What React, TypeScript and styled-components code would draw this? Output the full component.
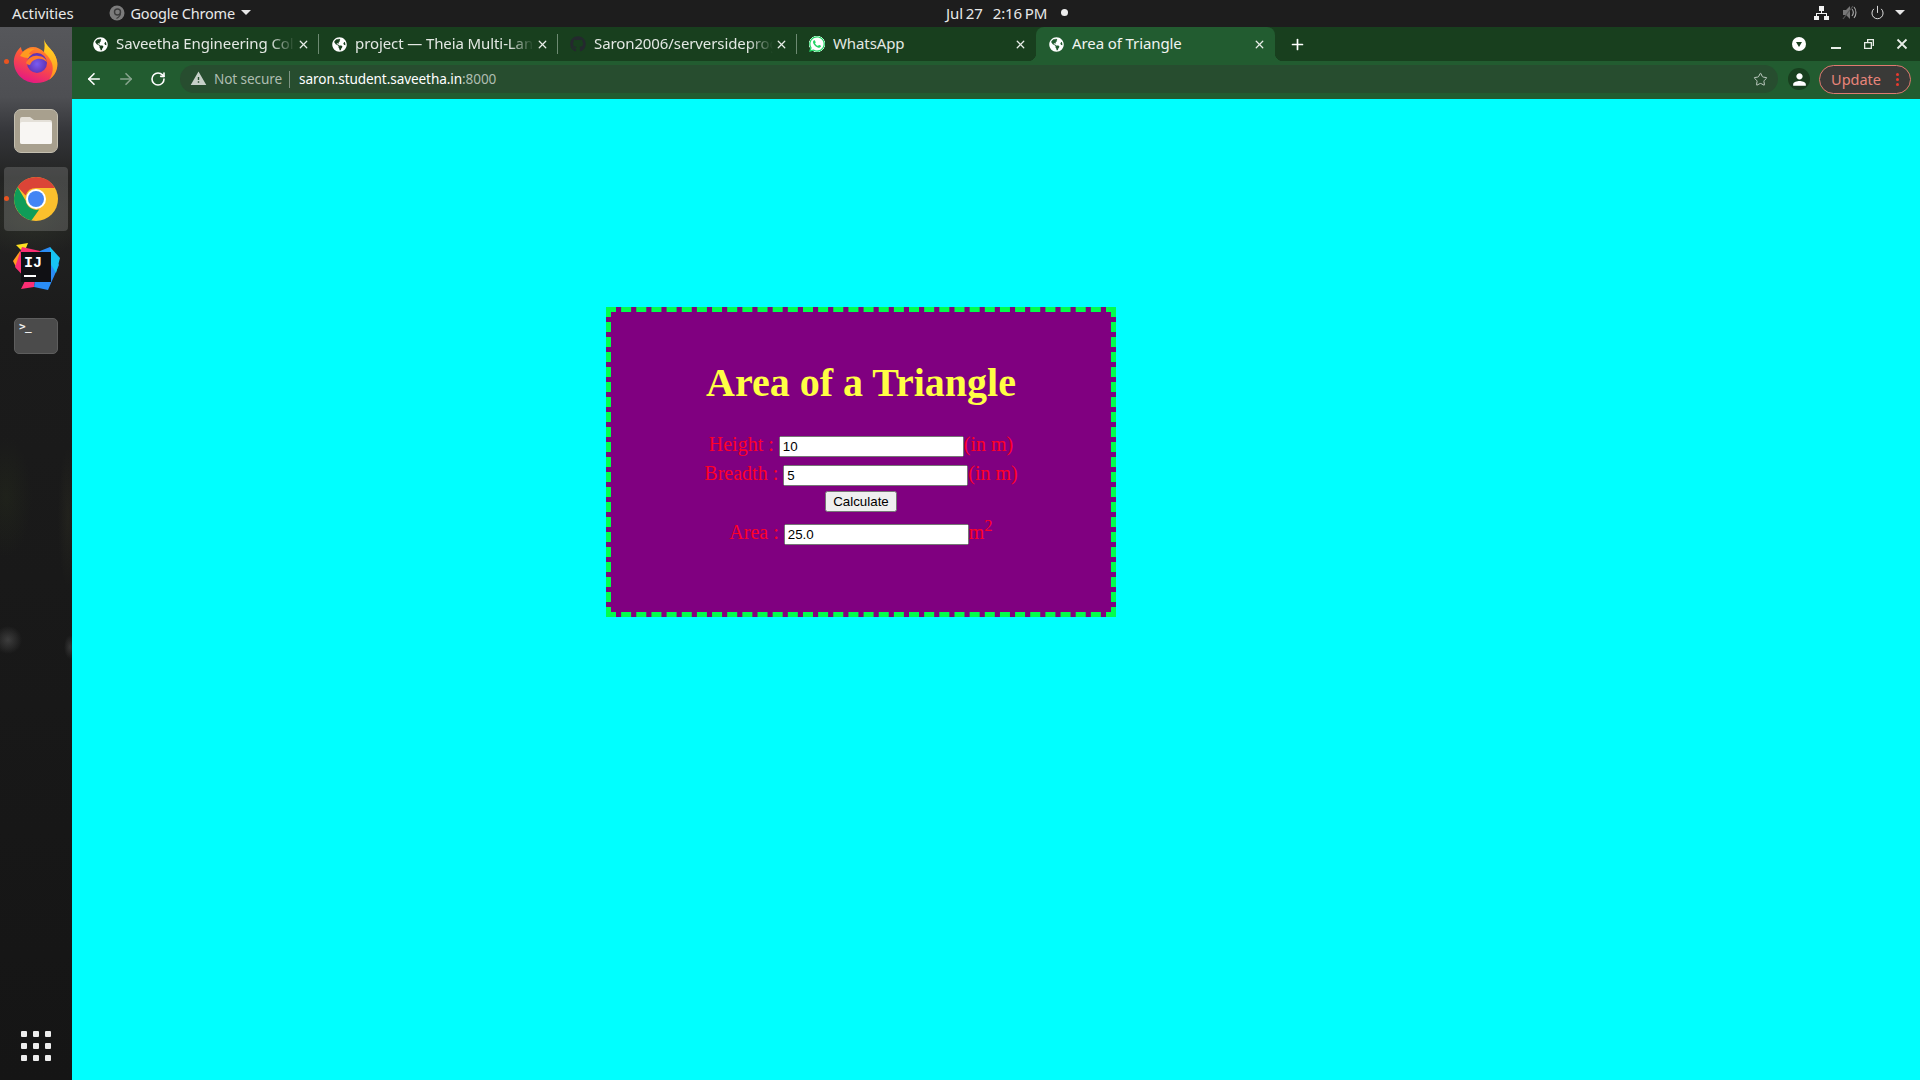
import { useState } from "react";
import styled, { createGlobalStyle } from "styled-components";
import { ArrowLeft, ArrowRight, RotateCw, Star, Plus, X, Power } from "lucide-react";
import { FaGlobeAmericas, FaWhatsapp, FaGithub } from "react-icons/fa";
import { MdPerson, MdWarning } from "react-icons/md";

const GlobalStyle = createGlobalStyle`
  html, body { margin: 0; padding: 0; height: 100%; background: #1d1d1d; overflow: hidden; }
  #root { height: 100%; }
  * { box-sizing: border-box; }
`;

const UI_FONT = `"Noto Sans", "Open Sans", sans-serif`;

const Desktop = styled.div`
  width: 1920px;
  height: 1080px;
  display: flex;
  flex-direction: column;
  font-family: ${UI_FONT};
`;

/* ---------- gnome top bar ---------- */
const TopBar = styled.header`
  height: 27px;
  flex: none;
  background: #1d1d1d;
  color: #e8e8e8;
  font-size: 15px;
  letter-spacing: -0.1px;
  display: flex;
  align-items: center;
  position: relative;
  padding: 0 0 2px 12px;
`;
const AppMenu = styled.div`
  display: flex;
  align-items: center;
  margin-left: 35px;
  gap: 6px;
  font-size: 14.5px;
  letter-spacing: -0.2px;
`;
const Caret = styled.span`
  width: 0;
  height: 0;
  border-left: 5px solid transparent;
  border-right: 5px solid transparent;
  border-top: 5px solid #e8e8e8;
`;
const TrayCaret = styled(Caret)`
  margin-left: -3px;
`;
const Clock = styled.div`
  position: absolute;
  left: 946px;
  top: 0;
  height: 25px;
  display: flex;
  align-items: center;
  gap: 10px;
  word-spacing: -1px;
`;
const RecordDot = styled.span`
  width: 7px;
  height: 7px;
  border-radius: 50%;
  background: #eee;
  margin-left: 4px;
`;
const Tray = styled.div`
  margin-left: auto;
  display: flex;
  align-items: center;
  gap: 13px;
  padding-right: 15px;
`;

/* ---------- dock ---------- */
const Body = styled.div`
  flex: 1;
  display: flex;
  min-height: 0;
`;
const Dock = styled.aside`
  width: 72px;
  flex: none;
  position: relative;
  display: flex;
  flex-direction: column;
  align-items: center;
  padding-top: 3px;
  background:
    radial-gradient(ellipse 14px 14px at 8px 613px, rgba(190, 190, 190, 0.22), transparent),
    radial-gradient(ellipse 6px 12px at 70px 620px, rgba(170, 170, 170, 0.2), transparent),
    radial-gradient(ellipse 26px 60px at 6px 470px, rgba(50, 62, 30, 0.22), transparent),
    radial-gradient(ellipse 10px 70px at 68px 490px, rgba(60, 60, 40, 0.25), transparent),
    radial-gradient(ellipse 60px 40px at 30px 190px, rgba(60, 66, 50, 0.4), transparent),
    linear-gradient(180deg, #56575b 0, #4e4f53 70px, #35363a 105px, #232423 150px, #1b1b1b 300px, #151515 100%);
`;
const DockSlot = styled.div<{ $active?: boolean; $running?: boolean }>`
  width: 64px;
  height: 64px;
  margin-bottom: 4.5px;
  flex: none;
  display: flex;
  align-items: center;
  justify-content: center;
  border-radius: 4px;
  position: relative;
  background: ${(p) => (p.$active ? "rgba(255,255,255,0.16)" : "transparent")};
  &::before {
    content: "";
    display: ${(p) => (p.$running ? "block" : "none")};
    position: absolute;
    left: 0;
    top: 29px;
    width: 5px;
    height: 5px;
    border-radius: 50%;
    background: #e95420;
  }
`;
const FoxMark = styled.svg`
  width: 46px;
  height: 46px;
  margin-bottom: 3px;
`;
const FolderTile = styled.div`
  width: 44px;
  height: 44px;
  border-radius: 7px;
  background: #a8a08e;
  border: 1px solid #c4bfb0;
  display: flex;
  align-items: center;
  justify-content: center;
`;
const TerminalTile = styled.div`
  width: 44px;
  height: 36px;
  border-radius: 5px;
  background: #4b4b4b;
  border: 1px solid #5e5e5e;
  color: #eee;
  font: 700 11px "DejaVu Sans Mono", monospace;
  padding: 1px 0 0 4px;
  line-height: 13px;
  letter-spacing: -0.5px;
`;
const AppGrid = styled.div`
  position: absolute;
  left: 21px;
  bottom: 19px;
  display: grid;
  grid-template-columns: repeat(3, 6px);
  gap: 6px;
  & > span {
    width: 6px;
    height: 6px;
    border-radius: 1px;
    background: #eeeeee;
  }
`;

/* ---------- browser chrome ---------- */
const Browser = styled.main`
  flex: 1;
  min-width: 0;
  display: flex;
  flex-direction: column;
`;
const TabStrip = styled.div`
  height: 34px;
  flex: none;
  background: #183f1e;
  display: flex;
  align-items: stretch;
  padding-left: 8px;
  position: relative;
`;
const Tab = styled.div<{ $active?: boolean; $divider?: boolean }>`
  width: 239px;
  flex: none;
  display: flex;
  align-items: center;
  position: relative;
  padding: 0 8px 0 12px;
  color: ${(p) => (p.$active ? "#f1f4f1" : "#e3e8e3")};
  background: ${(p) => (p.$active ? "#225c30" : "transparent")};
  border-radius: 8px 8px 0 0;
  font-size: 15px;
  letter-spacing: -0.1px;
  &::after {
    content: "";
    display: ${(p) => (p.$divider ? "block" : "none")};
    position: absolute;
    right: 0;
    top: 7px;
    height: 20px;
    width: 1px;
    background: #6d8a72;
  }
`;
const TabFlare = styled.span<{ $side: "left" | "right" }>`
  position: absolute;
  bottom: 0;
  width: 8px;
  height: 8px;
  ${(p) => (p.$side === "left" ? "left: -8px;" : "right: -8px;")}
  background: radial-gradient(
    circle at ${(p) => (p.$side === "left" ? "0 0" : "100% 0")},
    transparent 8px,
    #225c30 8.5px
  );
`;
const TabIcon = styled.span`
  width: 16px;
  height: 16px;
  flex: none;
  display: flex;
  align-items: center;
  justify-content: center;
  margin-right: 8px;
`;
const WhatsIcon = styled.span`
  width: 18px;
  height: 18px;
  flex: none;
  display: flex;
  border-radius: 50%;
  background: radial-gradient(circle, #fff 62%, transparent 66%);
`;
const TabTitle = styled.span<{ $fade?: boolean }>`
  flex: 1;
  min-width: 0;
  padding-bottom: 2px;
  white-space: nowrap;
  overflow: hidden;
  ${(p) =>
    p.$fade
      ? "mask-image: linear-gradient(90deg, #000 86%, transparent 100%);"
      : ""}
`;
const TabClose = styled.span`
  width: 16px;
  height: 16px;
  flex: none;
  display: flex;
  align-items: center;
  justify-content: center;
  color: #e8ede8;
`;
const NewTab = styled.span`
  margin-left: 14px;
  display: flex;
  align-items: center;
  color: #fff;
`;
const WindowControls = styled.div`
  margin-left: auto;
  display: flex;
  align-items: center;
  padding-right: 12px;
`;
const TabSearch = styled.span`
  width: 14px;
  height: 14px;
  border-radius: 50%;
  background: #fff;
  display: flex;
  align-items: center;
  justify-content: center;
  margin-right: 24px;
  &::before {
    content: "";
    border-left: 3.5px solid transparent;
    border-right: 3.5px solid transparent;
    border-top: 5px solid #183f1e;
  }
`;
const WinButton = styled.svg`
  width: 12px;
  height: 12px;
  margin-left: 21px;
  &:first-of-type {
    margin-left: 0;
  }
`;

const Toolbar = styled.div`
  height: 38px;
  flex: none;
  background: #225c30;
  display: flex;
  align-items: center;
  padding: 0 9px 2px 12px;
  color: #fff;
`;
const NavButton = styled.span<{ $dim?: boolean }>`
  width: 20px;
  height: 20px;
  display: flex;
  align-items: center;
  justify-content: center;
  margin-right: 12px;
  color: ${(p) => (p.$dim ? "#86a48d" : "#ffffff")};
`;
const Omnibox = styled.div`
  width: 1599px;
  height: 28px;
  border-radius: 14px;
  background: #274d2f;
  display: flex;
  align-items: center;
  padding: 0 10px 0 10px;
  font-size: 13.6px;
  letter-spacing: -0.1px;
`;
const Security = styled.span`
  display: flex;
  align-items: center;
  color: #aebdb1;
  gap: 7px;
  padding: 0 7px 1px 0;
  margin-right: 9px;
  border-right: 1px solid #7d9483;
  height: 17px;
`;
const Url = styled.span`
  color: #fff;
  padding-bottom: 2px;
  & > em {
    font-style: normal;
    color: #aebdb1;
  }
`;
const OmniStar = styled.span`
  margin-left: auto;
  display: flex;
  color: #c0ccc3;
`;
const Avatar = styled.span`
  width: 22px;
  height: 22px;
  margin-left: 10px;
  border-radius: 50%;
  background: #183f1e;
  display: flex;
  align-items: center;
  justify-content: center;
  color: #fff;
`;
const UpdatePill = styled.div`
  width: 92px;
  height: 29px;
  margin-left: 9px;
  border-radius: 15px;
  border: 1px solid #e07a70;
  background: #3a3a38;
  color: #e9857b;
  font-size: 14.5px;
  display: flex;
  align-items: center;
  padding-left: 11px;
`;
const KebabDots = styled.span`
  margin-left: auto;
  margin-right: 11px;
  display: flex;
  flex-direction: column;
  gap: 2px;
  & > i {
    width: 3px;
    height: 3px;
    border-radius: 50%;
    background: #ea3a2e;
  }
`;

/* ---------- the page itself ---------- */
const Page = styled.section`
  flex: 1;
  background: #00ffff;
  padding: 208px 0 0 534px;
`;
const Card = styled.div`
  width: 510px;
  height: 310px;
  background: #800080;
  border: 5px dashed #00ff4c;
  padding-top: 48px;
  text-align: center;
  font-family: "Liberation Serif", "Times New Roman", serif;
  color: #ff0028;
  font-size: 20px;
`;
const Title = styled.h1`
  margin: 0 0 24px;
  font-size: 40px;
  line-height: 46px;
  color: #ffff44;
`;
const FieldRow = styled.div`
  height: 29px;
  line-height: 29px;
  white-space: nowrap;
`;
const Field = styled.input`
  width: 185px;
  vertical-align: baseline;
  font-family: "Liberation Sans", Arial, sans-serif;
`;
const ActionRow = styled.div`
  height: 25px;
  line-height: 26px;
  margin-top: -2px;
`;
const Submit = styled.button`
  font-family: "Liberation Sans", Arial, sans-serif;
`;

const TABS = [
  { title: "Saveetha Engineering College", icon: "globe" },
  { title: "project — Theia Multi-Language", icon: "globe" },
  { title: "Saron2006/serversideprogramming", icon: "github" },
  { title: "WhatsApp", icon: "whatsapp" },
  { title: "Area of Triangle", icon: "globe", active: true },
];

function TabFavicon({ kind }: { kind: string }) {
  if (kind === "github") return <FaGithub size={16} color="#24292e" />;
  if (kind === "whatsapp")
    return (
      <WhatsIcon>
        <FaWhatsapp size={18} color="#25d366" />
      </WhatsIcon>
    );
  return <FaGlobeAmericas size={15} color="#ffffff" />;
}

function FirefoxLogo() {
  return (
    <FoxMark viewBox="0 0 46 46">
      <defs>
        <linearGradient id="ffBody" x1="0.7" y1="0" x2="0.3" y2="1">
          <stop offset="0" stopColor="#ffb11f" />
          <stop offset="0.45" stopColor="#ff5a36" />
          <stop offset="1" stopColor="#e31587" />
        </linearGradient>
        <linearGradient id="ffFlame" x1="0.5" y1="0" x2="0.4" y2="1">
          <stop offset="0" stopColor="#ffe226" />
          <stop offset="1" stopColor="#ff8a1f" />
        </linearGradient>
        <radialGradient id="ffGlobe" cx="0.5" cy="0.55" r="0.6">
          <stop offset="0" stopColor="#7a5cf0" />
          <stop offset="1" stopColor="#5b2aa8" />
        </radialGradient>
      </defs>
      <path d="M31 1c1 5 5 8 9 13 4 6 5 11 4 16-2 9-10 15-21 15C11 45 2 36 1 26c-1-7 3-14 7-17 0 2 1 4 2 5 2-3 6-5 10-5 4 0 8 2 11 5 1-4 1-9 0-13z" fill="url(#ffBody)" />
      <path d="M31 1c1 5 5 8 9 13 4 6 5 11 4 16-1 5-4 9-8 12 4-6 5-13 2-19-2-4-5-7-7-9 1-4 1-9 0-13z" fill="url(#ffFlame)" />
      <path d="M7 18c3-6 9-9 15-7-3 1-5 3-6 5 2 0 4 1 5 2-3 2-7 3-14 0z" fill="#ff9a1f" />
      <circle cx="24" cy="25" r="10" fill="url(#ffGlobe)" />
      <path d="M13 25c2-5 7-8 12-7 5 0 8 3 9 6-3-3-7-4-10-3-4 1-6 3-7 6-2 0-3-1-4-2z" fill="#ff7a2a" />
    </FoxMark>
  );
}

function ChromeLogo() {
  return (
    <svg width="44" height="44" viewBox="0 0 44 44">
      <circle cx="22" cy="22" r="22" fill="#fbc02d" />
      <path d="M22 0a22 22 0 0 1 19.05 11H22a11 11 0 0 0-10.4 7.4L3.6 10A22 22 0 0 1 22 0z" fill="#db4437" />
      <path d="M3.6 10l8 13.6a11 11 0 0 0 13.6 8.9L17.4 43.5A22 22 0 0 1 3.6 10z" fill="#0f9d58" />
      <circle cx="22" cy="22" r="10" fill="#fff" />
      <circle cx="22" cy="22" r="8" fill="#4285f4" />
    </svg>
  );
}

function IdeaLogo() {
  return (
    <svg width="48" height="50" viewBox="0 0 48 50">
      <polygon points="4,2 16,0 12,10" fill="#fde021" />
      <polygon points="1,18 8,8 12,28 5,26" fill="#ff9a1f" />
      <polygon points="3,24 10,4 28,8 22,44 9,46 14,36" fill="#fc2e74" />
      <polygon points="28,8 38,4 47,22 36,47 22,44" fill="#2a8cf5" />
      <polygon points="38,4 48,15 44,30 38,20" fill="#17c3f2" />
      <rect x="9" y="9" width="30" height="30" fill="#101014" />
      <text x="12" y="24" fontFamily="Liberation Mono, monospace" fontWeight="700" fontSize="15" fill="#fff">IJ</text>
      <rect x="12" y="32" width="12" height="2" fill="#fff" />
    </svg>
  );
}

function Dockbar() {
  return (
    <Dock>
      <DockSlot $running>
        <FirefoxLogo />
      </DockSlot>
      <DockSlot>
        <FolderTile>
          <svg width="34" height="29" viewBox="0 0 34 29">
            <path d="M1 3a2 2 0 0 1 2-2h8l4 3h16a2 2 0 0 1 2 2v20a2 2 0 0 1-2 2H3a2 2 0 0 1-2-2z" fill="#e4e0d8" />
            <path d="M1 8a2 2 0 0 1 2-2h28a2 2 0 0 1 2 2v18a2 2 0 0 1-2 2H3a2 2 0 0 1-2-2z" fill="#f8f6f3" />
          </svg>
        </FolderTile>
      </DockSlot>
      <DockSlot $active $running>
        <ChromeLogo />
      </DockSlot>
      <DockSlot>
        <IdeaLogo />
      </DockSlot>
      <DockSlot>
        <TerminalTile>&gt;_</TerminalTile>
      </DockSlot>
      <AppGrid>
        {Array.from({ length: 9 }, (_, i) => (
          <span key={i} />
        ))}
      </AppGrid>
    </Dock>
  );
}

function StatusBar() {
  return (
    <TopBar>
      <span>Activities</span>
      <AppMenu>
        <svg width="16" height="16" viewBox="0 0 16 16">
          <circle cx="8" cy="8" r="7.5" fill="#7c7c7c" />
          <circle cx="8.5" cy="7" r="3" fill="none" stroke="#3c3c3c" strokeWidth="1.4" />
          <path d="M11.5 7.5c0 3-2 5-4 6" fill="none" stroke="#3c3c3c" strokeWidth="1.2" />
        </svg>
        <span>Google Chrome</span>
        <Caret />
      </AppMenu>
      <Clock>
        <span>Jul 27</span>
        <span>2:16 PM</span>
        <RecordDot />
      </Clock>
      <Tray>
        <svg width="15" height="14" viewBox="0 0 15 14">
          <path d="M5 0h5v5H8v2h5v3h2v4h-5v-4h2V8H3v2h2v4H0v-4h2V7h5V5H5z" fill="#f2f2f2" />
        </svg>
        <svg width="15" height="15" viewBox="0 0 15 15">
          <path d="M1 5h3l4-4v13l-4-4H1z" fill="#777" />
          <path d="M10 4c1.5 2 1.5 5 0 7M12 2c2.6 3 2.6 8 0 11" fill="none" stroke="#aaa" strokeWidth="1.1" />
          <path d="M1 14L11 1" stroke="#555" strokeWidth="1.2" />
        </svg>
        <Power size={15} strokeWidth={1.5} color="#e8e8e8" />
        <TrayCaret />
      </Tray>
    </TopBar>
  );
}

function Tabs() {
  return (
    <TabStrip>
      {TABS.map((tab, i) => (
        <Tab key={tab.title} $active={tab.active} $divider={i < 3}>
          {tab.active && <TabFlare $side="left" />}
          {tab.active && <TabFlare $side="right" />}
          <TabIcon>
            <TabFavicon kind={tab.icon} />
          </TabIcon>
          <TabTitle $fade={i < 3}>{tab.title}</TabTitle>
          <TabClose>
            <X size={13} strokeWidth={2.4} />
          </TabClose>
        </Tab>
      ))}
      <NewTab>
        <Plus size={17} strokeWidth={2.4} />
      </NewTab>
      <WindowControls>
        <TabSearch />
        <WinButton viewBox="0 0 12 12">
          <rect x="1" y="9" width="10" height="2" fill="#e8ede8" />
        </WinButton>
        <WinButton viewBox="0 0 12 12">
          <path d="M4 1h7v7H9v3H1V4h3z M5.3 2.3V4H9v3.7h.7V2.3z M2.3 5.3v4.4h5.4V5.3z" fill="#e8ede8" fillRule="evenodd" />
        </WinButton>
        <WinButton viewBox="0 0 12 12">
          <path d="M1.5 1.5l9 9M10.5 1.5l-9 9" stroke="#e8ede8" strokeWidth="1.8" />
        </WinButton>
      </WindowControls>
    </TabStrip>
  );
}

function AddressBar() {
  return (
    <Toolbar>
      <NavButton>
        <ArrowLeft size={18} strokeWidth={2.2} />
      </NavButton>
      <NavButton $dim>
        <ArrowRight size={18} strokeWidth={2.2} />
      </NavButton>
      <NavButton>
        <RotateCw size={16} strokeWidth={2.4} />
      </NavButton>
      <Omnibox>
        <Security>
          <MdWarning size={17} color="#c6d0c8" />
          <span>Not secure</span>
        </Security>
        <Url>
          saron.student.saveetha.in<em>:8000</em>
        </Url>
        <OmniStar>
          <Star size={15} strokeWidth={1.6} />
        </OmniStar>
      </Omnibox>
      <Avatar>
        <MdPerson size={19} />
      </Avatar>
      <UpdatePill>
        Update
        <KebabDots>
          <i />
          <i />
          <i />
        </KebabDots>
      </UpdatePill>
    </Toolbar>
  );
}

function TriangleCard() {
  const [height, setHeight] = useState("10");
  const [breadth, setBreadth] = useState("5");
  const [area, setArea] = useState("25.0");

  return (
    <Card>
      <Title>Area of a Triangle</Title>
      <FieldRow>
        Height : <Field value={height} onChange={(e) => setHeight(e.target.value)} />(in m)
      </FieldRow>
      <FieldRow>
        Breadth : <Field value={breadth} onChange={(e) => setBreadth(e.target.value)} />(in m)
      </FieldRow>
      <ActionRow>
        <Submit
          type="button"
          onClick={() => setArea(((Number(height) * Number(breadth)) / 2).toFixed(1))}
        >
          Calculate
        </Submit>
      </ActionRow>
      <FieldRow>
        Area : <Field value={area} readOnly />m<sup>2</sup>
      </FieldRow>
    </Card>
  );
}

export default function App() {
  return (
    <Desktop>
      <GlobalStyle />
      <StatusBar />
      <Body>
        <Dockbar />
        <Browser>
          <Tabs />
          <AddressBar />
          <Page>
            <TriangleCard />
          </Page>
        </Browser>
      </Body>
    </Desktop>
  );
}
